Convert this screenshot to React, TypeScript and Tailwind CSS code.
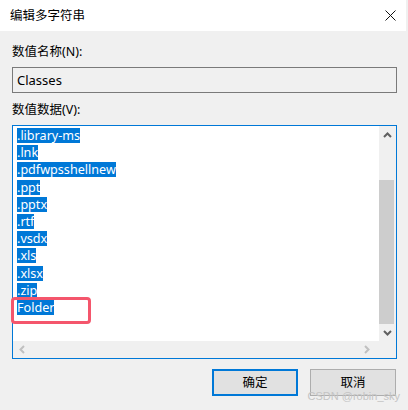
import React from 'react';

const items = ['.library-ms', '.lnk', '.pdfwpsshellnew', '.ppt', '.pptx', '.rtf', '.vsdx', '.xls', '.xlsx', '.zip', 'Folder'];

const font = { fontFamily: '"Noto Sans", "Noto Sans CJK SC", sans-serif' };

const App: React.FC = () => {
  return (
    <div className="w-[408px] h-[410px] bg-[#f0f0f0] overflow-hidden relative text-[#000]" style={font}>
      <div className="w-[406px] h-full flex flex-col bg-[#f0f0f0]">
        {/* title bar */}
        <div className="h-[31px] bg-white flex items-center justify-between pl-[10px] pr-[10px]">
          <span className="text-[12.5px] leading-[16px] text-black">编辑多字符串</span>
          <svg width="11" height="11" viewBox="0 0 11 11">
            <path d="M0.5 0.5L10.5 10.5M10.5 0.5L0.5 10.5" stroke="#111" strokeWidth="1" />
          </svg>
        </div>

        <div className="flex flex-col pl-[12px] pr-[9px] pt-[13px]">
          <label className="text-[12.5px] leading-[16px]">数值名称(N):</label>
          <div className="mt-[7px] h-[26px] w-[385px] border border-[#7a7a7a] bg-[#f0f0f0] flex items-center pl-[4px]">
            <span className="text-[13px] leading-[16px]">Classes</span>
          </div>

          <label className="mt-[9px] text-[12.5px] leading-[16px]">数值数据(V):</label>

          <div className="mt-[7px] relative w-[385px] h-[234px] border border-[#0078d7] bg-white flex flex-col">
            <div className="flex flex-1 min-h-0">
              <div className="flex-1 flex flex-col pt-[2px] pl-[4px]">
                {items.map(it => (
                  <div key={it} className="h-[17.2px] flex items-start">
                    <span className="bg-[#0078d7] text-white text-[12.6px] h-[15px] leading-[15px]">{it}</span>
                  </div>
                ))}
              </div>
              {/* vertical scrollbar */}
              <div className="w-[17px] bg-[#f0f0f0] flex flex-col">
                <div className="h-[17px] flex items-center justify-center">
                  <svg width="9" height="6" viewBox="0 0 9 6">
                    <path d="M1 5L4.5 1.5L8 5" stroke="#606060" strokeWidth="2" fill="none" />
                  </svg>
                </div>
                <div className="h-[37px]" />
                <div className="flex-1 bg-[#cdcdcd] mr-[2px]" />
                <div className="h-[17px] flex items-center justify-center">
                  <svg width="9" height="6" viewBox="0 0 9 6">
                    <path d="M1 1L4.5 4.5L8 1" stroke="#606060" strokeWidth="2" fill="none" />
                  </svg>
                </div>
              </div>
            </div>
            {/* horizontal scrollbar */}
            <div className="h-[17px] bg-[#f0f0f0] flex items-center justify-between pl-[6px] pr-[26px]">
              <svg width="6" height="9" viewBox="0 0 6 9">
                <path d="M5 1L1.5 4.5L5 8" stroke="#c0c0c0" strokeWidth="2" fill="none" />
              </svg>
              <svg width="6" height="9" viewBox="0 0 6 9">
                <path d="M1 1L4.5 4.5L1 8" stroke="#c0c0c0" strokeWidth="2" fill="none" />
              </svg>
            </div>

            {/* annotation */}
            <div className="absolute left-[-2px] top-[171px] w-[80px] h-[27px] border-[3px] border-[#f4566c] rounded-[4px]" />
          </div>

          <div className="mt-[10px] flex justify-end gap-[12px] pr-[1px]">
            <button className="w-[86px] h-[27px] border-2 border-[#0078d7] bg-[#e1e1e1] text-[12.5px] leading-[16px]">确定</button>
            <button className="w-[86px] h-[27px] border border-[#adadad] bg-[#e1e1e1] text-[12.5px] leading-[16px]">取消</button>
          </div>
        </div>
      </div>

      <span className="absolute right-[8px] top-[390px] text-[11px] leading-[13px] text-[#c4c4c4]" style={{ fontFamily: '"Liberation Sans", sans-serif' }}>
        CSDN @robin_sky
      </span>
    </div>
  );
};

export default App;
